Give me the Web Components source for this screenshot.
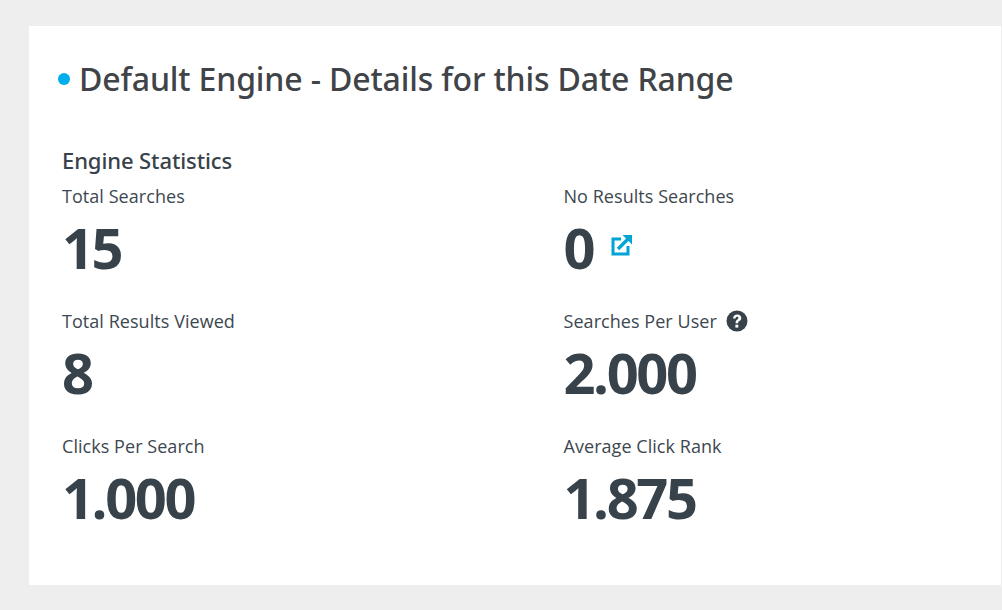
<!DOCTYPE html>
<html>
<head>
<meta charset="utf-8">
<style>
html, body { margin: 0; height: 100%; background: #eeeeee; overflow: hidden; }
body { font-family: "Open Sans", "Noto Sans", sans-serif; }
</style>
</head>
<body>
<template id="stat-tpl">
  <style>
    :host { display: block; height: 125px; color: #37424a; }
    .label { font-size: 18px; line-height: 24px; letter-spacing: 0.05px; color: #3d474f; display: flex; align-items: center; gap: 9px; height: 24px; }
    .value { font-size: 56px; font-weight: 700; line-height: 78px; letter-spacing: -2.4px; display: flex; align-items: center; gap: 18px; color: #37424a; }
    ::slotted(svg) { display: block; }
  </style>
  <div class="label"><span id="label"></span><slot name="label-icon"></slot></div>
  <div class="value"><span id="value"></span><slot name="value-icon"></slot></div>
</template>

<engine-details>
  <stat-item label="Total Searches" value="15"></stat-item>
  <stat-item label="No Results Searches" value="0">
    <svg slot="value-icon" width="22" height="22" viewBox="0 0 22 22" fill="none" style="margin-top:-4px">
      <path d="M10 5H2v15h15v-8" stroke="#00a4d6" stroke-width="3"/>
      <path d="M7 15 18 4" stroke="#00a4d6" stroke-width="3.4"/>
      <path d="M11.5 1H21v9.500z" fill="#00a4d6"/>
    </svg>
  </stat-item>
  <stat-item label="Total Results Viewed" value="8"></stat-item>
  <stat-item label="Searches Per User" value="2.000">
    <svg slot="label-icon" width="22" height="22" viewBox="0 0 22 22">
      <circle cx="11" cy="11" r="10.500" fill="#37424a"/>
      <path d="M7 8.400C7.200 5.900 9 4.500 11.300 4.500c2.300 0 4 1.400 4 3.400 0 1.600-.9 2.400-1.900 3.100-.9.600-1.200 1-1.200 1.900v.3H9.600v-.6c0-1.500.7-2.200 1.500-2.800.8-.6 1.300-1 1.300-1.700 0-.8-.5-1.300-1.300-1.300-.9 0-1.500.6-1.600 1.600z" fill="#fff"/>
      <rect x="9.400" y="14.700" width="2.900" height="2.900" fill="#fff"/>
    </svg>
  </stat-item>
  <stat-item label="Clicks Per Search" value="1.000"></stat-item>
  <stat-item label="Average Click Rank" value="1.875"></stat-item>
</engine-details>

<script>
class StatItem extends HTMLElement {
  constructor() {
    super();
    this.attachShadow({ mode: 'open' });
    this.shadowRoot.appendChild(document.getElementById('stat-tpl').content.cloneNode(true));
  }
  connectedCallback() {
    this.shadowRoot.getElementById('label').textContent = this.getAttribute('label');
    this.shadowRoot.getElementById('value').textContent = this.getAttribute('value');
  }
}

class EngineDetails extends HTMLElement {
  constructor() {
    super();
    this.attachShadow({ mode: 'open' });
    this.shadowRoot.innerHTML = /*html*/`
    <style>
      :host { display: block; margin: 26px 0 0 29px; height: 559px; width: 972px; background: #fff; box-sizing: border-box; padding: 31px 0 0 29px; }
      .title { display: flex; align-items: center; gap: 9px; height: 44px; }
      .dot { width: 12px; height: 12px; border-radius: 50%; background: #00aeef; margin-top: -1px; }
      h2 { margin: 0; font-family: "Noto Sans", "Open Sans", sans-serif; font-size: 32px; line-height: 44px; font-weight: 500; letter-spacing: -0.15px; color: #404347; }
      .body { padding: 0 0 0 4px; margin-top: 45px; }
      h3 { margin: 0 0 10px; font-family: "Noto Sans", "Open Sans", sans-serif; font-size: 22px; line-height: 28px; font-weight: 500; letter-spacing: -0.1px; color: #37424a; }
      .grid { display: grid; grid-template-columns: 501.500px 1fr; }
    </style>
    <div class="title"><span class="dot"></span><h2>Default Engine - Details for this Date Range</h2></div>
    <div class="body">
      <h3>Engine Statistics</h3>
      <div class="grid"><slot></slot></div>
    </div>`;
  }
}

customElements.define('stat-item', StatItem);
customElements.define('engine-details', EngineDetails);
</script>
</body>
</html>
